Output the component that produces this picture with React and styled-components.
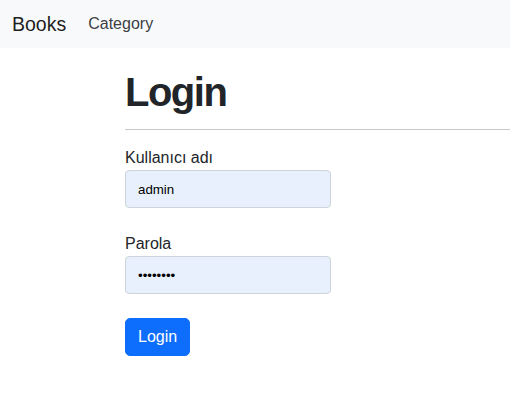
import styled, { createGlobalStyle } from "styled-components";

const GlobalStyle = createGlobalStyle`
  * {
    box-sizing: border-box;
  }
  body {
    margin: 0;
    background: #fff;
    color: #212529;
    font-family: "Liberation Sans", Arial, sans-serif;
  }
`;

const Navbar = styled.nav`
  display: flex;
  align-items: center;
  gap: 22px;
  height: 48px;
  padding: 0 12px;
  background: #f8f9fa;
`;

const Brand = styled.span`
  font-size: 19.5px;
  color: rgba(0, 0, 0, 0.9);
`;

const NavLink = styled.span`
  font-size: 16px;
  color: rgba(33, 37, 41, 0.9);
`;

const Main = styled.main`
  padding-left: 125px;
`;

const Title = styled.h1`
  margin: 20px 0 13px;
  font-size: 40px;
  line-height: 48px;
  font-weight: 700;
  letter-spacing: -1.5px;
  color: #212529;
`;

const Divider = styled.hr`
  margin: 0 0 16px;
  border: 0;
  border-top: 1px solid #c8c9ca;
`;

const Form = styled.form`
  display: flex;
  flex-direction: column;
  align-items: flex-start;
  gap: 24px;
`;

const Field = styled.div`
  display: flex;
  flex-direction: column;
`;

const Label = styled.label`
  font-size: 16px;
  line-height: 24px;
  color: #212529;
`;

const Input = styled.input`
  width: 206px;
  height: 38px;
  padding: 0 12px;
  border: 1px solid #ced4da;
  border-radius: 4px;
  background: #e8f0fe;
  color: #000;
  font-family: "Liberation Sans", Arial, sans-serif;
  font-size: 13.3px;
  outline: none;
`;

const Button = styled.button`
  height: 38px;
  padding: 0 12px;
  border: 1px solid #0d6efd;
  border-radius: 5px;
  background: #0d6efd;
  color: #fff;
  font-family: "Liberation Sans", Arial, sans-serif;
  font-size: 16px;
  cursor: pointer;
`;

export default function App() {
  return (
    <>
      <GlobalStyle />
      <Navbar>
        <Brand>Books</Brand>
        <NavLink>Category</NavLink>
      </Navbar>
      <Main>
        <Title>Login</Title>
        <Divider />
        <Form onSubmit={(e) => e.preventDefault()}>
          <Field>
            <Label htmlFor="username">Kullanıcı adı</Label>
            <Input id="username" type="text" defaultValue="admin" readOnly />
          </Field>
          <Field>
            <Label htmlFor="password">Parola</Label>
            <Input id="password" type="password" defaultValue="12345678" readOnly />
          </Field>
          <Button type="submit">Login</Button>
        </Form>
      </Main>
    </>
  );
}
